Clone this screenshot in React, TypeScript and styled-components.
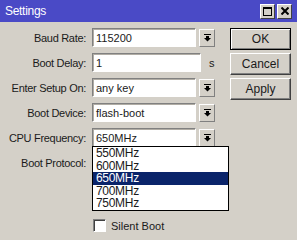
import styled, { createGlobalStyle } from "styled-components"

const Global = createGlobalStyle`
  html, body {
    margin: 0;
    padding: 0;
    background: #d4d0c8;
  }
  body {
    font-family: "Liberation Sans", Arial, sans-serif;
    font-size: 11px;
    color: #1a1a1a;
  }
`

const Window = styled.div`
  width: 297px;
  height: 240px;
  background: #d4d0c8;
  display: flex;
  flex-direction: column;
  overflow: hidden;
`

const TitleBar = styled.div`
  height: 22px;
  background: #4a4ac6;
  display: flex;
  align-items: center;
  justify-content: space-between;
  padding: 0 5px 0 5px;
  color: #fff;
  font-size: 12px;
  letter-spacing: -0.3px;
`

const TitleButtons = styled.div`
  display: flex;
  gap: 2px;
`

const TitleBtn = styled.div`
  width: 13px;
  height: 13px;
  background: #d4d0c8;
  border: 1px solid;
  border-color: #fff #404040 #404040 #fff;
  display: flex;
  align-items: center;
  justify-content: center;
`

const Body = styled.div`
  position: relative;
  display: flex;
  padding: 6px 6px 0 0;
  gap: 15px;
`

const Left = styled.div`
  display: flex;
  flex-direction: column;
`

const Form = styled.div`
  display: grid;
  grid-template-columns: 86px auto;
  column-gap: 6px;
  row-gap: 6px;
  grid-auto-rows: 19px;
  align-items: center;
`

const Label = styled.div`
  text-align: right;
  white-space: nowrap;
  letter-spacing: -0.3px;
`

const Field = styled.div`
  display: flex;
  align-items: center;
  gap: 3px;
`

const Input = styled.div<{ $w: number }>`
  width: ${p => p.$w}px;
  height: 19px;
  box-sizing: border-box;
  background: #fff;
  border: 1px solid;
  border-color: #808080 #fff #fff #808080;
  box-shadow: inset 1px 1px 0 #b0aca4;
  padding: 3px 3px 0;
  white-space: nowrap;
`

const Unit = styled.span`
  margin-left: 5px;
`

const DropBtn = styled.div`
  width: 16px;
  height: 18px;
  box-sizing: border-box;
  background: #d4d0c8;
  border: 1px solid;
  border-color: #fff #808080 #808080 #fff;
  display: flex;
  align-items: center;
  justify-content: center;
`

const Buttons = styled.div`
  display: flex;
  flex-direction: column;
  gap: 3px;
`

const Button = styled.div<{ $default?: boolean }>`
  width: 61px;
  height: 22px;
  box-sizing: border-box;
  display: flex;
  align-items: center;
  justify-content: center;
  border: 1px solid;
  border-color: ${p => (p.$default ? "#000" : "#fff #404040 #404040 #fff")};
  box-shadow: ${p => (p.$default ? "inset 1px 1px 0 #fff, inset -1px -1px 0 #808080" : "inset -1px -1px 0 #808080")};
  font-size: 12px;
`

const CheckRow = styled.div`
  display: flex;
  align-items: center;
  gap: 5px;
  margin: 47px 0 0 93px;
`

const Check = styled.div`
  width: 13px;
  height: 13px;
  box-sizing: border-box;
  background: #fff;
  border: 1px solid;
  border-color: #808080 #fff #fff #808080;
  box-shadow: inset 1px 1px 0 #404040;
`

const List = styled.div`
  position: absolute;
  left: 92px;
  top: 124px;
  width: 137px;
  box-sizing: border-box;
  background: #fff;
  border: 1px solid #000;
`

const Option = styled.div<{ $sel?: boolean }>`
  height: 12.6px;
  line-height: 12.6px;
  padding-left: 3px;
  font-size: 12px;
  letter-spacing: -0.3px;
  background: ${p => (p.$sel ? "#0a246a" : "transparent")};
  color: ${p => (p.$sel ? "#fff" : "#1a1a1a")};
`

function ArrowIcon() {
  return (
    <svg width="7" height="8" viewBox="0 0 7 8">
      <rect x="0" y="0" width="7" height="1" fill="#000" />
      <rect x="2" y="2" width="3" height="2" fill="#000" />
      <polygon points="0,4 7,4 3.5,7.5" fill="#000" />
    </svg>
  )
}

function Combo({ value }: { value: string }) {
  return (
    <Field>
      <Input $w={104}>{value}</Input>
      <DropBtn>
        <ArrowIcon />
      </DropBtn>
    </Field>
  )
}

const freqs = ["550MHz", "600MHz", "650MHz", "700MHz", "750MHz"]

export default function App() {
  return (
    <Window>
      <Global />
      <TitleBar>
        <span>Settings</span>
        <TitleButtons>
          <TitleBtn>
            <svg width="9" height="9" viewBox="0 0 9 9">
              <rect x="0.5" y="0.5" width="8" height="8" fill="none" stroke="#000" />
              <rect x="0" y="0" width="9" height="2" fill="#000" />
            </svg>
          </TitleBtn>
          <TitleBtn>
            <svg width="8" height="8" viewBox="0 0 8 8">
              <path d="M0.5 0.5 L7.5 7.5 M7.5 0.5 L0.5 7.5" stroke="#000" strokeWidth="2" />
            </svg>
          </TitleBtn>
        </TitleButtons>
      </TitleBar>
      <Body>
        <Left>
          <Form>
            <Label>Baud Rate:</Label>
            <Combo value="115200" />
            <Label>Boot Delay:</Label>
            <Field>
              <Input $w={109}>1</Input>
              <Unit>s</Unit>
            </Field>
            <Label>Enter Setup On:</Label>
            <Combo value="any key" />
            <Label>Boot Device:</Label>
            <Combo value="flash-boot" />
            <Label>CPU Frequency:</Label>
            <Combo value="650MHz" />
            <Label>Boot Protocol:</Label>
            <Combo value="" />
          </Form>
          <CheckRow>
            <Check />
            <span>Silent Boot</span>
          </CheckRow>
        </Left>
        <Buttons>
          <Button $default>OK</Button>
          <Button>Cancel</Button>
          <Button>Apply</Button>
        </Buttons>
        <List>
          {freqs.map(f => (
            <Option key={f} $sel={f === "650MHz"}>
              {f}
            </Option>
          ))}
        </List>
      </Body>
    </Window>
  )
}
